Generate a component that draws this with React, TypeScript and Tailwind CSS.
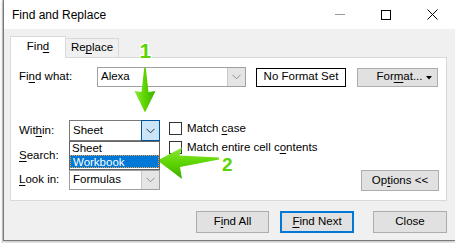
import React from "react";

const font = { fontFamily: '"Segoe UI", "Liberation Sans", Arial, sans-serif' };

function Chevron({ color = "#606060" }: { color?: string }) {
  return (
    <svg width="9" height="6" viewBox="0 0 9 6">
      <polyline points="0.5,0.8 4.5,4.8 8.5,0.8" fill="none" stroke={color} strokeWidth="1" />
    </svg>
  );
}

function U({ children }: { children: React.ReactNode }) {
  return <span className="underline underline-offset-2 decoration-1">{children}</span>;
}

function Btn({ children, className = "" }: { children: React.ReactNode; className?: string }) {
  return (
    <div className={`flex items-center justify-center bg-[#e1e1e1] border border-[#adadad] text-black ${className}`}>
      {children}
    </div>
  );
}

export default function App() {
  return (
    <div className="relative w-[455px] h-[243px] overflow-hidden bg-white text-[11.5px] text-black" style={font}>
      <div className="flex h-[243px]">
        {/* spreadsheet fragment at left */}
        <div className="w-[3px] h-full bg-white border-r border-[#d4d4d4] flex flex-col">
          <div className="h-[20px]" />
        </div>
        {/* dialog window */}
        <div className="flex-1 h-[241px] flex flex-col border-l border-b border-[#7a7a7a] bg-[#f0f0f0] shadow-[0_1px_3px_rgba(0,0,0,0.3)]">
          {/* title bar */}
          <div className="h-[29px] bg-white flex items-center">
            <div className="pl-[8px] text-[12px] flex-1 pt-[1px]">Find and Replace</div>
            <div className="flex h-full">
              <div className="w-[46px] h-full flex items-center justify-center">
                <div className="w-[10px] h-px bg-[#999]" />
              </div>
              <div className="w-[46px] h-full flex items-center justify-center">
                <div className="w-[10px] h-[10px] border border-black" />
              </div>
              <div className="w-[46px] h-full flex items-center justify-center">
                <svg width="11" height="11" viewBox="0 0 11 11">
                  <path d="M0.5 0.5 L10.5 10.5 M10.5 0.5 L0.5 10.5" stroke="#000" strokeWidth="1" />
                </svg>
              </div>
            </div>
          </div>

          {/* tabs */}
          <div className="flex items-end pl-[6px] pt-[7px]">
            <div className="relative z-10 w-[56px] h-[22px] -mb-px bg-white border border-b-0 border-[#d9d9d9] flex items-center justify-center pb-[1px]">
              Fin<U>d</U>
            </div>
            <div className="w-[53px] h-[19px] bg-[#f0f0f0] border border-l-0 border-b-0 border-[#d9d9d9] flex items-center justify-center">
              Re<U>p</U>lace
            </div>
          </div>

          {/* panel */}
          <div className="ml-[6px] w-[437px] h-[144px] bg-white border border-[#d9d9d9] flex flex-col pl-[8px] pt-[9px]">
            {/* find what row */}
            <div className="flex items-center h-[20px]">
              <div className="w-[78px]">
                Fi<U>n</U>d what:
              </div>
              <div className="w-[149px] h-[20px] border border-[#a0a0a0] flex items-center">
                <div className="flex-1 pl-[3px]">Alexa</div>
                <div className="w-[18px] h-full bg-[#e5e5e5] border-l border-[#c8c8c8] flex items-center justify-center">
                  <Chevron color="#909090" />
                </div>
              </div>
              <div className="ml-[10px] w-[90px] h-[19px] border border-black flex items-center justify-center">
                No Format Set
              </div>
              <Btn className="ml-[11px] w-[81px] h-[19px] relative">
                <span className="pl-[4px]">
                  For<U>m</U>at...
                </span>
                <svg className="absolute right-[5px] top-[7px]" width="6" height="4" viewBox="0 0 6 4">
                  <polygon points="0,0 6,0 3,3.5" fill="#000" />
                </svg>
              </Btn>
            </div>

            {/* lower area */}
            <div className="flex mt-[33px]">
              <div className="flex flex-col">
                <div className="flex items-center h-[21px]">
                  <div className="w-[50px]">
                    Wit<U>h</U>in:
                  </div>
                  <div className="relative w-[91px] h-[21px] border border-[#7a7a7a] flex items-center">
                    <div className="flex-1 pl-[3px]">Sheet</div>
                    <div className="w-[19px] h-[21px] -mr-px -my-px bg-[#cce4f7] border border-[#005499] flex items-center justify-center">
                      <Chevron color="#333" />
                    </div>
                    {/* dropdown list */}
                    <div className="absolute left-[-1px] top-[20px] w-[91px] h-[29px] bg-white border border-[#646464] z-20 flex flex-col">
                      <div className="h-[13px] leading-[13px] pl-[2px]">Sheet</div>
                      <div className="h-[13px] leading-[12px] pl-[2px] bg-[#0078d7] text-white border border-dotted border-[#f0a040]">
                        Workbook
                      </div>
                    </div>
                  </div>
                </div>
                <div className="flex items-center h-[29px]">
                  <div className="w-[50px]">
                    <U>S</U>earch:
                  </div>
                </div>
                <div className="flex items-center h-[20px]">
                  <div className="w-[50px]">
                    <U>L</U>ook in:
                  </div>
                  <div className="w-[91px] h-[20px] border border-[#a0a0a0] flex items-center">
                    <div className="flex-1 pl-[3px]">Formulas</div>
                    <div className="w-[18px] h-full bg-[#e5e5e5] border-l border-[#c8c8c8] flex items-center justify-center">
                      <Chevron color="#909090" />
                    </div>
                  </div>
                </div>
              </div>

              {/* checkboxes */}
              <div className="flex flex-col ml-[9px] pt-[2px] gap-[6px]">
                <div className="flex items-center h-[13px] gap-[5px]">
                  <div className="w-[13px] h-[13px] border border-[#333] bg-white" />
                  <span>
                    Match <U>c</U>ase
                  </span>
                </div>
                <div className="flex items-center h-[13px] gap-[5px]">
                  <div className="w-[13px] h-[13px] border border-[#333] bg-white" />
                  <span>
                    Match entire cell c<U>o</U>ntents
                  </span>
                </div>
              </div>

              <div className="flex-1 flex justify-end items-end pr-[7px]">
                <Btn className="w-[78px] h-[21px] -mb-px">
                  Op<U>t</U>ions &lt;&lt;
                </Btn>
              </div>
            </div>
          </div>

          {/* bottom buttons */}
          <div className="flex mt-[10px] pl-[192px]">
            <Btn className="w-[73px] h-[22px]">
              F<U>i</U>nd All
            </Btn>
            <div className="ml-[11px] w-[74px] h-[22px] bg-[#e1e1e1] border-2 border-[#0078d7] flex items-center justify-center">
              <U>F</U>ind Next
            </div>
            <Btn className="ml-[19px] w-[74px] h-[22px]">Close</Btn>
          </div>
        </div>
      </div>

      {/* green annotation arrows */}
      <svg className="absolute left-0 top-0 pointer-events-none" width="455" height="243" viewBox="0 0 455 243">
        <defs>
          <linearGradient id="g1" x1="0" y1="0" x2="1" y2="0">
            <stop offset="0" stopColor="#8ee83a" />
            <stop offset="0.5" stopColor="#5cd400" />
            <stop offset="1" stopColor="#3fae00" />
          </linearGradient>
          <linearGradient id="g2" x1="0" y1="0" x2="0" y2="1">
            <stop offset="0" stopColor="#8ee83a" />
            <stop offset="0.5" stopColor="#5cd400" />
            <stop offset="1" stopColor="#3fae00" />
          </linearGradient>
        </defs>
        <polygon
          points="144.2,68 145.8,68 148.5,92 155.5,91 145,112.5 134.5,91 141.5,92"
          fill="url(#g1)"
        />
        <polygon
          points="157.5,160.5 182,147.5 179.5,155.5 219,157.5 219,159.5 180,167 182,179"
          fill="url(#g2)"
        />
        <text
          x="139.5"
          y="58"
          fontFamily="Liberation Sans, Arial, sans-serif"
          fontWeight="700"
          fontSize="21"
          fill="#5cd400"
          stroke="#ffffff"
          strokeWidth="2.5"
          paintOrder="stroke"
        >
          1
        </text>
        <text
          x="222"
          y="171"
          fontFamily="Liberation Sans, Arial, sans-serif"
          fontWeight="700"
          fontSize="19"
          fill="#5cd400"
          stroke="#ffffff"
          strokeWidth="2.5"
          paintOrder="stroke"
        >
          2
        </text>
      </svg>
    </div>
  );
}
